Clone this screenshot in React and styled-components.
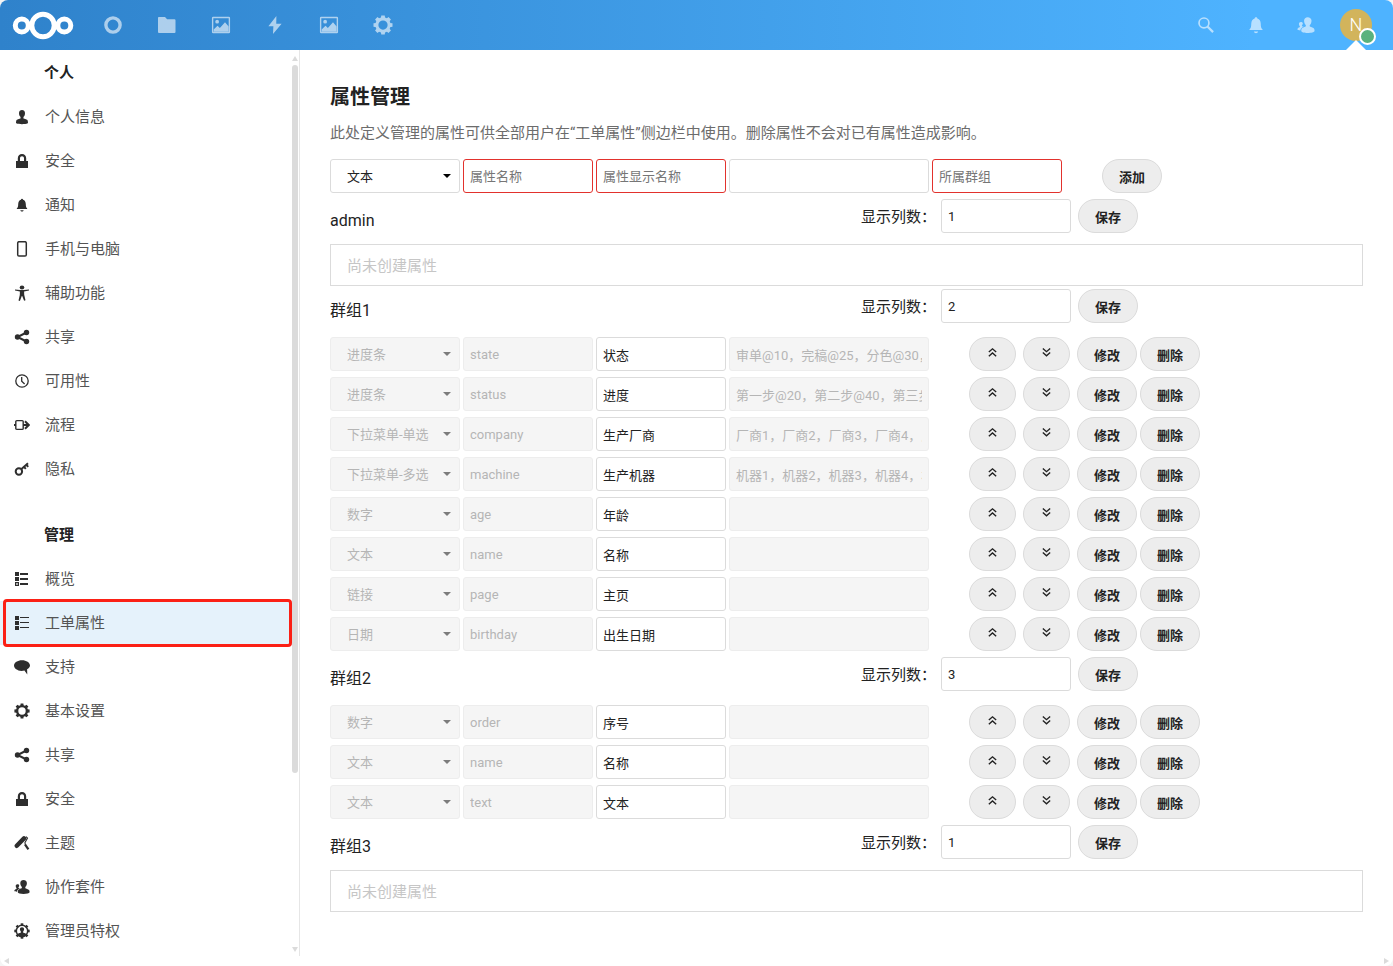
import React, { useState } from "react";
import styled, { createGlobalStyle } from "styled-components";

const GlobalStyle = createGlobalStyle`
  * {
    box-sizing: border-box;
  }
  html {
    background: #f4f4f4;
  }
  body {
    margin: 0;
    color: #222;
    font-family: Roboto, "Noto Sans CJK SC", sans-serif;
    font-size: 15px;
    line-height: 24px;
  }
  input,
  select,
  button {
    font-family: inherit;
  }
`;

const Page = styled.div`
  display: flex;
  flex-direction: column;
  height: 100vh;
  background: #fff;
  border-radius: 8px;
  overflow: hidden;
`;

/* ---------- header ---------- */

const Header = styled.header`
  flex: none;
  display: flex;
  justify-content: space-between;
  height: 50px;
  padding: 0 12px;
  background: linear-gradient(90deg, #2f82cb 0%, #4eb3ff 90%);
`;
const HeaderGroup = styled.div`
  display: flex;
  align-items: center;
`;
const Logo = styled.a`
  display: flex;
  margin-right: 12px;
`;
const AppLink = styled.a`
  display: flex;
  align-items: center;
  justify-content: center;
  width: 54px;
  height: 50px;
  color: #fff;
  opacity: 0.6;
`;
const HeaderButton = styled.button`
  position: relative;
  display: flex;
  align-items: center;
  justify-content: center;
  width: 50px;
  height: 50px;
  padding: 0;
  border: none;
  background: none;
  color: #fff;
  cursor: pointer;

  > svg {
    opacity: 0.6;
  }
`;
const Avatar = styled.span`
  width: 32px;
  height: 32px;
  border-radius: 50%;
  background: #d2b45c;
  font-size: 18px;
  font-weight: 300;
  line-height: 32px;
  text-align: center;
`;
const Caret = styled.span`
  position: absolute;
  bottom: 0;
  left: 15px;
  border: 10px solid transparent;
  border-top: none;
  border-bottom-color: #fff;
`;
const Status = styled.span`
  position: absolute;
  right: 5px;
  bottom: 5px;
  width: 17px;
  height: 17px;
  border: 2px solid #fff;
  border-radius: 50%;
  background: #5ab27e;
`;

/* ---------- sidebar ---------- */

const Body = styled.div`
  flex: 1;
  display: flex;
  min-height: 0;
`;
const Sidebar = styled.aside`
  flex: 0 0 300px;
  display: flex;
  border-right: 1px solid #e6e6e6;
`;
const Nav = styled.nav`
  flex: 1;
  padding-top: 1px;
  overflow: hidden;
`;
const NavList = styled.ul`
  margin: 0 0 22px;
  padding: 0;
  list-style: none;
`;
const NavTitle = styled.h3`
  margin: 0;
  padding-left: 44px;
  font-size: 15px;
  font-weight: 700;
  line-height: 44px;
`;
const NavItem = styled.a`
  position: relative;
  display: flex;
  align-items: center;
  gap: 15px;
  height: 44px;
  padding-left: 14px;
  background: ${({ $active }) => ($active ? "#e5f2fb" : "transparent")};
  color: #545454;
  text-decoration: none;

  svg {
    flex: none;
    color: #2e2e2e;
  }
`;
const Highlight = styled.span`
  position: absolute;
  inset: -2px 0 -2px 3px;
  border: 3px solid #fb2015;
  border-radius: 4px;
`;
const ScrollTrack = styled.div`
  display: flex;
  flex-direction: column;
  align-items: center;
  gap: 4px;
  width: 7px;
  padding: 6px 1px 4px 0;
`;
const ScrollThumb = styled.div`
  flex: 0 0 79%;
  width: 6px;
  border-radius: 3px;
  background: #dbdbdb;
`;
const Arrow = styled.span`
  width: 0;
  height: 0;
  border: 3px solid transparent;
  ${({ $dir }) =>
    ({
      up: "border-top: none; border-bottom: 5px solid #dbdbdb;",
      down: "border-bottom: none; border-top: 5px solid #dbdbdb; margin-top: auto;",
      left: "border-left: none; border-right: 5px solid #dbdbdb;",
      right: "border-right: none; border-left: 5px solid #dbdbdb;",
    })[$dir]}
`;
const BottomTrack = styled.div`
  flex: none;
  display: flex;
  align-items: center;
  justify-content: space-between;
  height: 10px;
  padding: 0 4px;
`;

/* ---------- content ---------- */

const Content = styled.main`
  flex: 1;
  min-width: 0;
  padding: 35px 30px 0;
  overflow: hidden;
`;
const Title = styled.h2`
  margin: 0 0 12px;
  font-size: 20px;
  font-weight: 700;
  line-height: 24px;
`;
const Hint = styled.p`
  margin: 0 0 11px;
  color: #6c6c6c;
`;
const Row = styled.div`
  display: flex;
  gap: 3px;
  padding: 3px 0;
`;
const Field = styled.input`
  flex: none;
  width: ${({ $wide }) => ($wide ? "200px" : "130px")};
  height: 34px;
  padding: 1px 6px 0;
  border: 1px solid #dbdbdb;
  border-radius: 3px;
  outline: none;
  background: #fff;
  color: #222;
  font-size: 13px;

  &:required:placeholder-shown {
    border-color: #e2322d;
  }
  &::placeholder {
    color: #767676;
  }
  &:disabled {
    border-color: #ededed;
    background: #f5f5f5;
    color: #b5b5b5;
  }
`;
const SelectBox = styled.div`
  position: relative;
  flex: none;

  &::after {
    content: "";
    position: absolute;
    top: 15px;
    right: 9px;
    border: 4px solid transparent;
    border-top-color: ${({ $disabled }) => ($disabled ? "#7c7c7c" : "#000")};
    border-bottom: none;
    pointer-events: none;
  }
`;
const Select = styled(Field)`
  padding-left: 16px;
  appearance: none;
  opacity: 1;
`;
const Button = styled.button`
  flex: none;
  width: ${({ $small }) => ($small ? "47px" : "60px")};
  height: 34px;
  padding: 0;
  border: 1px solid #dbdbdb;
  border-radius: 17px;
  background: #ededed;
  color: #222;
  font-size: 13px;
  font-weight: 700;
  cursor: pointer;
`;
const Actions = styled.div`
  display: flex;
  gap: ${({ $gap }) => $gap || "3px"};
  margin-left: ${({ $offset }) => $offset};
`;
const GroupHead = styled.div`
  display: flex;
  align-items: center;
  padding: 3px 0;
  margin-bottom: 8px;
`;
const GroupName = styled.h3`
  flex: 0 0 531px;
  align-self: flex-end;
  margin: 0;
  font-size: 16px;
  font-weight: 400;
  line-height: 24px;
`;
const ColumnLabel = styled.label`
  flex: 0 0 80px;
  padding-top: 2px;
`;
const Empty = styled.div`
  padding: 9px 16px 7px;
  border: 1px solid #dbdbdb;
  color: #c6c6c6;
`;

/* ---------- icons ---------- */

const shapes = {
  user: (
    <path d="M8 1C6.300 1 5 2.300 5 3.900c0 .8.100 1.600.4 2.500.3.700.8 1.100 1 1.400.2.600.3 1.200.1 1.600-1.200.4-2.400.8-3.500 1.400-.6.400-.8.800-1 2.900 0 .3.100.5.3.6 1.400.7 3.500.9 5.700.9s4.300-.2 5.700-.9c.2-.1.300-.3.3-.6-.2-2.100-.4-2.500-1-2.900-1.100-.6-2.300-1-3.500-1.400-.2-.4-.1-1 .1-1.600.2-.3.700-.7 1-1.400.3-.9.400-1.700.4-2.500C11 2.300 9.700 1 8 1z" />
  ),
  lock: (
    <path
      fillRule="evenodd"
      d="M8 1C5.500 1 3.800 2.900 3.800 5.200V8H2v7h12V8h-1.800V5.200C12.200 2.900 10.500 1 8 1zm0 2.200c1.200 0 2 .9 2 2V8H6V5.200c0-1.100.8-2 2-2z"
    />
  ),
  bell: (
    <path d="M8 1.800c-.6 0-1 .4-1.100 1C5.200 3.300 4.300 4.800 4.200 6.900c0 2.500-.3 3.500-1.400 4.500v.7h10.400v-.7c-1.100-1-1.400-2-1.400-4.500-.1-2.100-1-3.600-2.700-4.100-.1-.6-.5-1-1.100-1zM6.300 13.200c.2.800.9 1.300 1.700 1.300s1.500-.5 1.700-1.300z" />
  ),
  phone: <rect x="3.700" y="0.700" width="8.600" height="14.400" rx="1.300" fill="none" stroke="currentColor" strokeWidth="1.500" />,
  access: (
    <>
      <ellipse cx="8" cy="2.500" rx="2.300" ry="1.900" />
      <path d="M1 4.400l5.200.6h3.600l5.200-.6v1.200l-4.900.9.100 3.300 1.300 5.500-1.400.5L8.200 11h-.4l-1.900 4.900-1.400-.5 1.300-5.500.1-3.400L1 5.600z" />
    </>
  ),
  share: (
    <>
      <circle cx="3.500" cy="8" r="2.700" />
      <circle cx="12.500" cy="3.500" r="2.700" />
      <circle cx="12.500" cy="12.500" r="2.700" />
      <path d="M12.500 3.500L3.500 8l9 4.500" fill="none" stroke="currentColor" strokeWidth="2" />
    </>
  ),
  clock: (
    <g fill="none" stroke="currentColor" strokeWidth="1.300">
      <circle cx="8" cy="8" r="6.200" />
      <path d="M7.700 4v4.200l2.900 2.700" />
    </g>
  ),
  flow: (
    <g fill="none" stroke="currentColor">
      <rect x="1.800" y="3.600" width="7.400" height="8.800" rx="1" strokeWidth="1.400" />
      <path d="M0 8h2M9 8h5.500" strokeWidth="1.800" />
      <path d="M11 4.200L14.800 8 11 11.800" strokeWidth="2" />
    </g>
  ),
  key: (
    <g fill="none" stroke="currentColor" strokeWidth="2">
      <circle cx="4.900" cy="10.500" r="3.200" />
      <path d="M7.200 8.200L14 2.300M10 5.800l1.800 2M12.200 3.600l2 2.200" />
    </g>
  ),
  overview: (
    <path
      fillRule="evenodd"
      d="M1 1h4v4H1zM6 2h8v2H6zM1 6h4v4H1zM6 7h8v2H6zM1 11h4v4H1zm1.200 1.200v1.600h1.600v-1.600zM6 12h8v2H6z"
    />
  ),
  list: <path d="M1 1h4v4H1zM6 2h9v1H6zM1 6h4v4H1zM6 7h9v1H6zM1 11h4v4H1zM6 12h9v1H6z" />,
  chat: (
    <path d="M8 1.200c-4.400 0-8 2.400-8 5.300s3.300 5.200 7.500 5.400c1.200 0 2 0 2.900-.3l2.900 3.900-.2-5.200C14.900 9.400 16 8 16 6.500c0-2.900-3.600-5.300-8-5.300z" />
  ),
  gear: (
    <>
      <circle cx="8" cy="8" r="4.900" fill="none" stroke="currentColor" strokeWidth="2.400" />
      {[0, 45, 90, 135, 180, 225, 270, 315].map((angle) => (
        <path key={angle} d="M6.600.4h2.800l.3 2.500H6.300z" transform={`rotate(${angle} 8 8)`} />
      ))}
    </>
  ),
  theme: (
    <g fill="none" stroke="currentColor">
      <path d="M2.800 10.800L10 3.400" strokeWidth="4.400" strokeLinecap="round" />
      <path d="M12 1.700l1.500 1.400-2.600 4.700.6 1.800" strokeWidth="1.100" />
      <path d="M11 9.400l3.400 5" strokeWidth="2.200" />
    </g>
  ),
  contacts: (
    <>
      <path d="M9.500 1C7.700 1 6.300 2.300 6.300 4.100c0 .9.100 1.700.5 2.500.3.600.8 1.100 1 1.500.1.500.1.900-.1 1.200-1.200.4-2.200.8-2.900 1.300-.8.600-1 1.200-1 2.700.1 1.100 2.700 1.700 5.700 1.700s5.900-.6 6.100-1.700c0-1.600-.4-2.200-1-2.600-.9-.6-2-1-3.200-1.400-.2-.3-.2-.7 0-1.200.2-.4.700-.9 1-1.500.4-.8.500-1.600.5-2.500C12.900 2.300 11.300 1 9.500 1z" />
      <path d="M3.400 5.300c-1 0-1.700.7-1.700 1.700 0 .9.300 1.600.8 2.100.1.400.1.700-.1.900-1.200.4-2 .8-2.100 2.100.3.500 1.200.6 2.700.7.200-1.500.6-2.300 2.900-3.300l-1.500-.5c-.1-.2 0-.5.1-.8.400-.4.700-1 .7-1.700 0-.7-.8-1.200-1.800-1.200z" />
    </>
  ),
  admin: (
    <>
      <circle cx="8" cy="8" r="5.700" fill="none" stroke="currentColor" strokeWidth="1.500" />
      {[0, 45, 90, 135, 180, 225, 270, 315].map((angle) => (
        <path key={angle} d="M6.700.3h2.600v2.500H6.700z" transform={`rotate(${angle} 8 8)`} />
      ))}
      <path d="M8 4.200c-1.300 0-2.100.8-2.100 2 0 1.100.6 1.700.9 2.100v1.400c-1.400.3-2.800.6-3.200 1.400L5 13h6l1.400-1.900c-.4-.8-1.800-1.100-3.200-1.400V8.300c.3-.4.900-1 .9-2.100 0-1.200-.8-2-2.100-2z" />
    </>
  ),
  ring: <circle cx="8" cy="8" r="5.700" fill="none" stroke="currentColor" strokeWidth="2.700" />,
  folder: (
    <path d="M1.400 1.600h5l1.700 1.800h5.900c.5 0 .8.300.8.700v9.500c0 .5-.3.800-.8.800H1.600c-.5 0-.8-.3-.8-.8V2.300c0-.4.200-.7.600-.7z" />
  ),
  image: (
    <>
      <rect x="1.300" y="2" width="13.400" height="12" rx=".4" fill="none" stroke="currentColor" strokeWidth="1.100" />
      <circle cx="4.900" cy="5.300" r="1.500" />
      <path d="M2.100 13.300v-1.700l3.100-3 1.900 1.700L11.200 5.700l2.900 3.400v4.200z" />
    </>
  ),
  bolt: <path d="M9.100.8L2.700 9h4l-.3 6.200L13.300 7H9z" />,
  search: (
    <g fill="none" stroke="currentColor">
      <circle cx="6.200" cy="6.200" r="4.400" strokeWidth="1.500" />
      <path d="M9.300 9.300l5 5" strokeWidth="2" />
    </g>
  ),
  up: <path d="M3.500 7.500L8 3.500l4.500 4M3.500 12.500L8 8.500l4.500 4" fill="none" stroke="currentColor" strokeWidth="1.700" />,
  down: <path d="M3.500 3L8 7l4.500-4M3.500 8L8 12l4.500-4" fill="none" stroke="currentColor" strokeWidth="1.700" />,
};

const Icon = ({ name, size = 16 }) => (
  <svg width={size} height={size} viewBox="0 0 16 16" fill="currentColor" aria-hidden="true">
    {shapes[name]}
  </svg>
);

/* ---------- data ---------- */

const apps = ["ring", "folder", "image", "bolt", "image", "gear"];

const personal = [
  ["user", "个人信息"],
  ["lock", "安全"],
  ["bell", "通知"],
  ["phone", "手机与电脑"],
  ["access", "辅助功能"],
  ["share", "共享"],
  ["clock", "可用性"],
  ["flow", "流程"],
  ["key", "隐私"],
];

const administration = [
  ["overview", "概览"],
  ["list", "工单属性"],
  ["chat", "支持"],
  ["gear", "基本设置"],
  ["share", "共享"],
  ["lock", "安全"],
  ["theme", "主题"],
  ["contacts", "协作套件"],
  ["admin", "管理员特权"],
];

const groups = [
  { name: "admin", columns: 1, attributes: [] },
  {
    name: "群组1",
    columns: 2,
    attributes: [
      ["进度条", "state", "状态", "审单@10，完稿@25，分色@30，出版@50"],
      ["进度条", "status", "进度", "第一步@20，第二步@40，第三步@60"],
      ["下拉菜单-单选", "company", "生产厂商", "厂商1，厂商2，厂商3，厂商4，厂商5"],
      ["下拉菜单-多选", "machine", "生产机器", "机器1，机器2，机器3，机器4，机器5"],
      ["数字", "age", "年龄", ""],
      ["文本", "name", "名称", ""],
      ["链接", "page", "主页", ""],
      ["日期", "birthday", "出生日期", ""],
    ],
  },
  {
    name: "群组2",
    columns: 3,
    attributes: [
      ["数字", "order", "序号", ""],
      ["文本", "name", "名称", ""],
      ["文本", "text", "文本", ""],
    ],
  },
  { name: "群组3", columns: 1, attributes: [] },
];

const types = ["文本", "数字", "日期", "链接", "进度条", "下拉菜单-单选", "下拉菜单-多选"];

/* ---------- components ---------- */

const TypeSelect = ({ value, disabled }) => (
  <SelectBox $disabled={disabled}>
    <Select as="select" defaultValue={value} disabled={disabled} aria-label="类型">
      {types.map((type) => (
        <option key={type}>{type}</option>
      ))}
    </Select>
  </SelectBox>
);

const NavSection = ({ title, items, active, onSelect }) => (
  <>
    <NavTitle>{title}</NavTitle>
    <NavList>
      {items.map(([icon, label]) => {
        const id = `${title}-${label}`;
        return (
          <li key={id}>
            <NavItem href="#" $active={active === id} onClick={() => onSelect(id)}>
              <Icon name={icon} />
              {label}
              {active === id && <Highlight />}
            </NavItem>
          </li>
        );
      })}
    </NavList>
  </>
);

const AttributeRow = ({ attribute }) => {
  const [type, name, label, options] = attribute;
  return (
    <Row>
      <TypeSelect value={type} disabled />
      <Field defaultValue={name} disabled aria-label="属性名称" />
      <Field defaultValue={label} aria-label="属性显示名称" />
      <Field $wide defaultValue={options} disabled aria-label="选项" />
      <Actions $offset="37px" $gap="7px">
        <Button $small aria-label="上移">
          <Icon name="up" size={13} />
        </Button>
        <Button $small aria-label="下移">
          <Icon name="down" size={13} />
        </Button>
      </Actions>
      <Actions $offset="4px">
        <Button>修改</Button>
        <Button>删除</Button>
      </Actions>
    </Row>
  );
};

const Group = ({ group }) => (
  <section>
    <GroupHead>
      <GroupName>{group.name}</GroupName>
      <ColumnLabel htmlFor={`columns-${group.name}`}>显示列数：</ColumnLabel>
      <Field id={`columns-${group.name}`} defaultValue={group.columns} />
      <Actions $offset="7px">
        <Button>保存</Button>
      </Actions>
    </GroupHead>
    {group.attributes.length === 0 && <Empty>尚未创建属性</Empty>}
    {group.attributes.map((attribute) => (
      <AttributeRow key={attribute[1]} attribute={attribute} />
    ))}
  </section>
);

const App = () => {
  const [active, setActive] = useState("管理-工单属性");

  return (
    <Page lang="zh-CN">
      <GlobalStyle />
      <Header>
        <HeaderGroup>
          <Logo href="#" aria-label="Nextcloud">
            <svg width="62" height="30" viewBox="0 0 62 30" fill="none" stroke="#fff" strokeWidth="5">
              <circle cx="9.800" cy="15.500" r="6.500" />
              <circle cx="31" cy="15.500" r="11.200" />
              <circle cx="52.300" cy="15.500" r="6.500" />
            </svg>
          </Logo>
          {apps.map((app, index) => (
            <AppLink key={index} href="#" aria-label={app}>
              <Icon name={app} size={20} />
            </AppLink>
          ))}
        </HeaderGroup>
        <HeaderGroup>
          <HeaderButton aria-label="搜索">
            <Icon name="search" size={18} />
          </HeaderButton>
          <HeaderButton aria-label="通知">
            <Icon name="bell" size={20} />
          </HeaderButton>
          <HeaderButton aria-label="联系人">
            <Icon name="contacts" size={18} />
          </HeaderButton>
          <HeaderButton aria-label="设置">
            <Avatar>N</Avatar>
            <Caret />
            <Status />
          </HeaderButton>
        </HeaderGroup>
      </Header>
      <Body>
        <Sidebar>
          <Nav>
            <NavSection title="个人" items={personal} active={active} onSelect={setActive} />
            <NavSection title="管理" items={administration} active={active} onSelect={setActive} />
          </Nav>
          <ScrollTrack>
            <Arrow $dir="up" />
            <ScrollThumb />
            <Arrow $dir="down" />
          </ScrollTrack>
        </Sidebar>
        <Content>
          <Title>属性管理</Title>
          <Hint>此处定义管理的属性可供全部用户在“工单属性”侧边栏中使用。删除属性不会对已有属性造成影响。</Hint>
          <Row>
            <TypeSelect value="文本" />
            <Field placeholder="属性名称" required aria-label="属性名称" />
            <Field placeholder="属性显示名称" required aria-label="属性显示名称" />
            <Field $wide aria-label="选项" />
            <Field placeholder="所属群组" required aria-label="所属群组" />
            <Actions $offset="37px">
              <Button>添加</Button>
            </Actions>
          </Row>
          {groups.map((group) => (
            <Group key={group.name} group={group} />
          ))}
        </Content>
      </Body>
      <BottomTrack>
        <Arrow $dir="left" />
        <Arrow $dir="right" />
      </BottomTrack>
    </Page>
  );
};

export default App;
